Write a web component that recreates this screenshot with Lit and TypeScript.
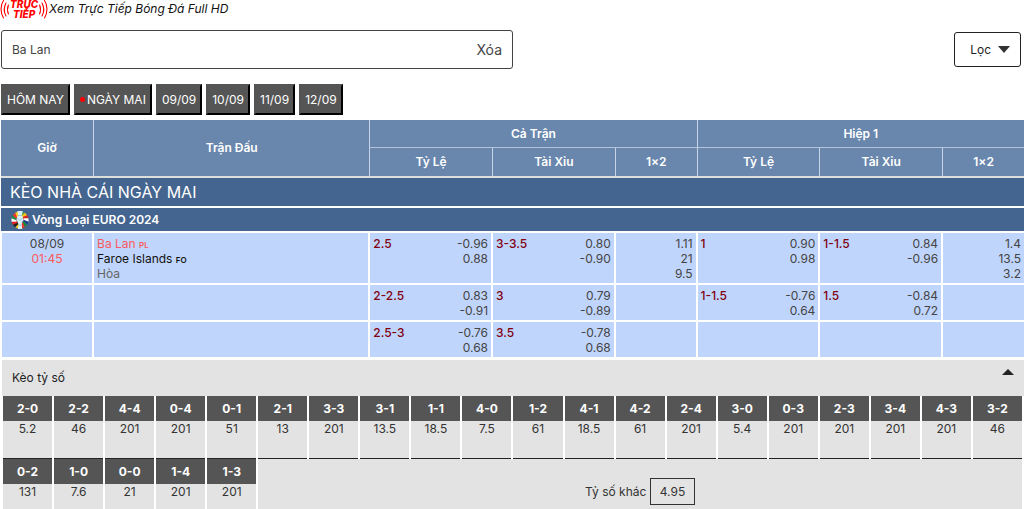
import { LitElement, html, css, svg, nothing } from "lit";
import { customElement, property, state } from "lit/decorators.js";

interface Market {
  line?: string;
  odds: string[];
}

interface OddsRow {
  time?: [string, string];
  teams?: boolean;
  markets: (Market | null)[];
}

const m = (line: string | undefined, ...odds: string[]): Market => ({ line, odds });

const ROWS: OddsRow[] = [
  {
    time: ["08/09", "01:45"],
    teams: true,
    markets: [
      m("2.5", "-0.96", "0.88"),
      m("3-3.5", "0.80", "-0.90"),
      m(undefined, "1.11", "21", "9.5"),
      m("1", "0.90", "0.98"),
      m("1-1.5", "0.84", "-0.96"),
      m(undefined, "1.4", "13.5", "3.2"),
    ],
  },
  {
    markets: [
      m("2-2.5", "0.83", "-0.91"),
      m("3", "0.79", "-0.89"),
      null,
      m("1-1.5", "-0.76", "0.64"),
      m("1.5", "-0.84", "0.72"),
      null,
    ],
  },
  {
    markets: [m("2.5-3", "-0.76", "0.68"), m("3.5", "-0.78", "0.68"), null, null, null, null],
  },
];

const SCORES: [string, string][] = [
  ["2-0", "5.2"], ["2-2", "46"], ["4-4", "201"], ["0-4", "201"], ["0-1", "51"],
  ["2-1", "13"], ["3-3", "201"], ["3-1", "13.5"], ["1-1", "18.5"], ["4-0", "7.5"],
  ["1-2", "61"], ["4-1", "18.5"], ["4-2", "61"], ["2-4", "201"], ["3-0", "5.4"],
  ["0-3", "201"], ["2-3", "201"], ["3-4", "201"], ["4-3", "201"], ["3-2", "46"],
  ["0-2", "131"], ["1-0", "7.6"], ["0-0", "21"], ["1-4", "201"], ["1-3", "201"],
];

@customElement("live-badge")
class LiveBadge extends LitElement {
  static styles = css`
    :host { display: flex; align-items: center; color: #f00; }
    .wave { fill: none; stroke: currentColor; stroke-width: 1.1; stroke-linecap: round; }
    .words { font: italic 800 10px/10px Inter, "Noto Sans", sans-serif; text-align: center; }
    .words span { display: block; }
  `;
  private wave(flip: boolean) {
    return html`<svg width="10" height="20" viewBox="0 0 10 20" aria-hidden="true">
      <g class="wave" transform=${flip ? "matrix(-1 0 0 1 10 0)" : "matrix(1 0 0 1 0 0)"}>
        ${svg`<path d="M3.500 1.500C.2 6 .2 14 3.500 19"/><path d="M6 4C3.800 8 3.800 13 6 17"/><path d="M8.400 6C7.200 9 7.200 12 8.400 15"/>`}
      </g>
    </svg>`;
  }
  render() {
    return html`${this.wave(false)}<span class="words"><span>TRỰC</span><span>TIẾP</span></span>${this.wave(true)}`;
  }
}

@customElement("odds-table")
class OddsTable extends LitElement {
  static styles = css`
    :host { display: block; }
    table { width: 100%; table-layout: fixed; border-collapse: separate; border-spacing: 0; }
    th, td { padding: 0; }
    .time { width: 9%; }
    .match { width: 27%; }
    .wide { width: 12%; }
    .narrow { width: 8%; }
    .head th {
      height: 27px;
      background: #6987ad;
      color: #fff;
      font-weight: 600;
      border-left: 1px solid #c9d5e6;
    }
    .head .sub { height: 28px; }
    .head th:first-child.edge { border-left: 0; }
    .head .group { border-bottom: 1px solid #b4c3d9; }
    .title th {
      height: 28px;
      padding-left: 9px;
      background: #44658f;
      color: #fff;
      border-top: 2px solid #dcdfda;
      font-size: 16px;
      font-weight: 400;
      text-align: left;
    }
    .league th {
      height: 23px;
      padding-left: 10px;
      background: #44658f;
      color: #fff;
      border-top: 2px solid #fff;
      border-bottom: 1px solid #fff;
      text-align: left;
      font-weight: 600;
    }
    .league-name { display: flex; align-items: center; gap: 3px; }
    .row td {
      padding: 3px 3px 2px;
      height: 30px;
      background: #c0d5fb;
      border: 1px solid #fff;
      vertical-align: top;
      line-height: 15px;
      color: #444;
    }
    .row td:last-child { border-right: 0; }
    .row .when { text-align: center; }
    .row div { display: block; }
    .hot { color: #f95a5e; }
    .away { color: #111; }
    .draw { color: #666; }
    .code { font-size: 8px; line-height: 8px; font-weight: 600; }
    .row .market { display: flex; justify-content: space-between; }
    .line { color: #800010; font-weight: 500; }
    .odds { margin-left: auto; text-align: right; }
  `;

  @property({ attribute: false }) rows: OddsRow[] = [];

  private crest() {
    const colours = ["#d9f1f5", "#3f9a50", "#f5c518", "#d22", "#fff", "#1d3f94", "#198a3c", "#e33", "#d9f1f5", "#f5c518", "#222", "#d22", "#fff", "#2a8f47", "#e33", "#f5c518"];
    return html`<svg width="18" height="20" viewBox="0 0 18 20" aria-hidden="true">
      ${colours.map((c, i) => svg`<rect x="7.300" y="1.500" width="3.400" height="5" fill=${c} transform="rotate(${i * 22.5} 9 10)"/>`)}
      ${svg`<path fill="#d9f1f5" d="M6.300 1h5.400l-.8 4.500c1.500 1.900 1.700 4.400.4 6.500l-.9 2.600.9 4.400H6.700l.9-4.400L6.700 12c-1.300-2.100-1.100-4.600.4-6.500z"/><path fill="none" stroke="#82bccb" stroke-width=".7" d="M7 5.500h4M6.800 8c1 2.600 3.400 2.600 4.400 0M7.500 15h3"/>`}
    </svg>`;
  }

  private market(x: Market | null) {
    if (!x) return nothing;
    return html`<div class="market">
      ${x.line ? html`<span class="line">${x.line}</span>` : nothing}
      <div class="odds">${x.odds.map((o) => html`<div>${o}</div>`)}</div>
    </div>`;
  }

  render() {
    return html`<table>
      <colgroup>
        <col class="time" /><col class="match" />
        <col class="wide" /><col class="wide" /><col class="narrow" />
        <col class="wide" /><col class="wide" /><col class="narrow" />
      </colgroup>
      <thead class="head">
        <tr>
          <th class="edge" rowspan="2">Giờ</th>
          <th rowspan="2">Trận Đấu</th>
          <th class="group" colspan="3">Cả Trận</th>
          <th class="group" colspan="3">Hiệp 1</th>
        </tr>
        <tr>
          ${["Tỷ Lệ", "Tài Xỉu", "1×2", "Tỷ Lệ", "Tài Xỉu", "1×2"].map((t) => html`<th class="sub">${t}</th>`)}
        </tr>
      </thead>
      <tbody>
        <tr class="title"><th colspan="8">KÈO NHÀ CÁI NGÀY MAI</th></tr>
        <tr class="league">
          <th colspan="8"><div class="league-name">${this.crest()}<span>Vòng Loại EURO 2024</span></div></th>
        </tr>
        ${this.rows.map((r) => html`<tr class="row">
          <td class="when">${r.time ? html`<div>${r.time[0]}</div><div class="hot">${r.time[1]}</div>` : nothing}</td>
          <td>${r.teams
            ? html`<div class="hot">Ba Lan <span class="code">PL</span></div>
                <div class="away">Faroe Islands <span class="code">FO</span></div>
                <div class="draw">Hòa</div>`
            : nothing}</td>
          ${r.markets.map((x) => html`<td>${this.market(x)}</td>`)}
        </tr>`)}
      </tbody>
    </table>`;
  }
}

@customElement("score-table")
class ScoreTable extends LitElement {
  static styles = css`
    :host { display: block; padding-top: 2px; }
    .bar {
      display: flex;
      width: 100%;
      height: 36px;
      padding: 0 10px;
      border: 0;
      border-left: 1px solid #fff;
      justify-content: space-between;
      align-items: center;
      background: #e3e3e3;
      color: #222;
      font: inherit;
    }
    .caret { align-self: flex-start; margin-top: 9px; }
    table { width: 100%; table-layout: fixed; border-collapse: separate; border-spacing: 2px 0; }
    th { height: 25px; padding: 0; background: #555; color: #fff; font-weight: 700; }
    td {
      height: 25px;
      padding: 0;
      background: #e3e3e3;
      color: #333;
      line-height: 15px;
      text-align: center;
      vertical-align: top;
    }
    .ruled td { border-bottom: 1px solid #222; height: 37px; }
    .other { height: auto; padding-top: 19px; }
    .price {
      display: inline-block;
      padding: 5px 9px;
      border: 1px solid #333;
    }
  `;

  @property({ attribute: false }) scores: [string, string][] = [];
  @state() private open = true;

  render() {
    const first = this.scores.slice(0, 20);
    const rest = this.scores.slice(20);
    return html`<button class="bar" aria-expanded=${this.open} @click=${() => (this.open = !this.open)}>
        <span>Kèo tỷ số</span>
        <svg class="caret" width="12" height="6" viewBox="0 0 12 6" aria-hidden="true"><path fill="#222" d="M0 6 6 0l6 6z" /></svg>
      </button>
      ${this.open
        ? html`<table>
            <tr>${first.map(([s]) => html`<th>${s}</th>`)}</tr>
            <tr class="ruled">${first.map(([, p]) => html`<td>${p}</td>`)}</tr>
            <tr>
              ${rest.map(([s]) => html`<th>${s}</th>`)}
              <td class="other" colspan=${20 - rest.length} rowspan="2">Tỷ số khác <span class="price">4.95</span></td>
            </tr>
            <tr>${rest.map(([, p]) => html`<td>${p}</td>`)}</tr>
          </table>`
        : nothing}`;
  }
}

@customElement("app-root")
class AppRoot extends LitElement {
  static styles = css`
    :host {
      display: block;
      background: #fff;
      color: #222;
      font: 400 12px/16px Inter, "Noto Sans", sans-serif;
    }
    .live { display: flex; align-items: center; height: 18px; gap: 1px; font-style: italic; }
    .live a { color: #111; text-decoration: none; }
    .tools { display: flex; justify-content: space-between; align-items: center; padding-top: 12px; }
    .search {
      display: flex;
      box-sizing: border-box;
      width: 50%;
      height: 39px;
      margin-left: 1px;
      padding: 0 10px;
      border: 1px solid #444;
      border-radius: 3px;
    }
    .search input {
      flex: 1;
      min-width: 0;
      padding: 0;
      border: 0;
      outline: 0;
      background: none;
      color: #444;
      font: inherit;
    }
    .clear { padding: 0; border: 0; background: none; color: #444; font: inherit; font-size: 14px; }
    .filter {
      display: flex;
      align-items: center;
      gap: 7px;
      height: 35px;
      margin-right: 3px;
      padding: 0 10px 0 15px;
      border: 1px solid #222;
      border-radius: 3px;
      background: #fff;
      color: #222;
      font: inherit;
    }
    .days { display: flex; gap: 4px; padding: 15px 0 5px 1px; }
    .day {
      display: flex;
      align-items: center;
      gap: 2px;
      height: 31px;
      padding: 0 4px;
      border: 2px outset #000;
      background: #555;
      color: #fff;
      font: inherit;
    }
    .dot { width: 5px; height: 5px; border-radius: 50%; background: #f00; }
    .board { padding-left: 1px; }
  `;

  @state() private query = "Ba Lan";
  @state() private day = "NGÀY MAI";

  render() {
    return html`
      <div class="live"><live-badge></live-badge><a href="#live">Xem Trực Tiếp Bóng Đá Full HD</a></div>
      <div class="tools">
        <div class="search">
          <input type="text" aria-label="Ba Lan" .value=${this.query}
            @input=${(e: Event) => (this.query = (e.target as HTMLInputElement).value)} />
          <button class="clear" @click=${() => (this.query = "")}>Xóa</button>
        </div>
        <button class="filter">Lọc
          <svg width="12" height="7" viewBox="0 0 12 7" aria-hidden="true"><path fill="#333" d="M0 0h12L6 7z" /></svg>
        </button>
      </div>
      <div class="days">
        ${["HÔM NAY", "NGÀY MAI", "09/09", "10/09", "11/09", "12/09"].map(
          (d) => html`<button class="day" @click=${() => (this.day = d)}>
            ${d === this.day ? html`<span class="dot"></span>` : nothing}${d}
          </button>`
        )}
      </div>
      <div class="board">
        <odds-table .rows=${ROWS}></odds-table>
        <score-table .scores=${SCORES}></score-table>
      </div>
    `;
  }
}
